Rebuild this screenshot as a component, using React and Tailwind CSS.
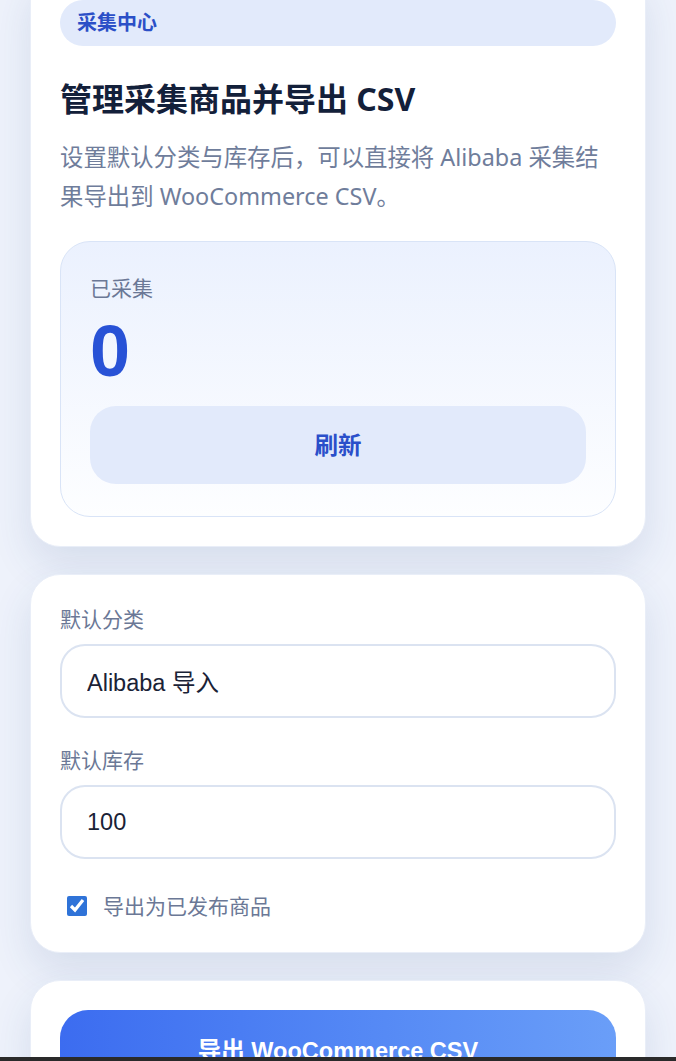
import { useState } from "react";

const sans = "font-['Noto_Sans','Noto_Sans_CJK_SC',sans-serif]";
const arial = "font-['Liberation_Sans','Noto_Sans_CJK_SC',sans-serif]";

export default function App() {
  const [category, setCategory] = useState("Alibaba 导入");
  const [stock, setStock] = useState("100");
  const [published, setPublished] = useState(true);

  return (
    <div className={`min-h-screen bg-[#eef2fb] px-[30px] ${sans}`}>
      <div className="-mt-[30px] flex flex-col gap-[27px] pb-10">
        {/* Summary card */}
        <section className="rounded-[30px] border border-[#e9eef8] bg-white p-[29px] shadow-[0_18px_40px_rgba(40,70,130,0.12)]">
          <div className="flex h-[46px] items-center rounded-full bg-[#e2eafb] px-[17px] text-[20px] font-bold text-[#2b4fc7]">
            采集中心
          </div>
          <h1 className="mt-[32px] text-[32px] font-bold leading-[42px] text-[#13203a]">
            管理采集商品并导出 CSV
          </h1>
          <p className="mt-[18px] text-[23.4px] leading-[39px] text-[#6f7d9b]">
            设置默认分类与库存后，可以直接将 Alibaba 采集结果导出到 WooCommerce CSV。
          </p>

          {/* Stats box */}
          <div className="mt-[25px] rounded-[30px] border-[1.5px] border-[#d9e4f7] bg-gradient-to-b from-[#ebf1fe] to-[#fdfeff] px-[29px] pb-[32px] pt-[30px]">
            <div className="text-[21px] leading-[32px] text-[#6b7896]">已采集</div>
            <div className={`mt-[12px] text-[72px] font-bold leading-[70px] text-[#2852d6] ${arial}`}>0</div>
            <button
              type="button"
              className={`mt-[20px] h-[78px] w-full rounded-[26px] bg-[#e2eafb] pt-[4px] text-[23.5px] font-bold text-[#2a4fca] ${arial}`}
            >
              刷新
            </button>
          </div>
        </section>

        {/* Settings card */}
        <section className="rounded-[30px] border border-[#e9eef8] bg-white px-[29px] pb-[30px] pt-[28px] shadow-[0_18px_40px_rgba(40,70,130,0.12)]">
          <label className="block text-[21px] leading-[32px] text-[#6b7896]">默认分类</label>
          <input
            type="text"
            value={category}
            onChange={(e) => setCategory(e.target.value)}
            className={`mt-[9px] h-[74px] w-full rounded-[25px] border-2 border-[#dbe3f1] bg-white px-[25px] text-[23.5px] text-[#1a2236] outline-none ${arial}`}
          />

          <label className="mt-[26px] block text-[21px] leading-[32px] text-[#6b7896]">默认库存</label>
          <input
            type="text"
            value={stock}
            onChange={(e) => setStock(e.target.value)}
            className={`mt-[9px] h-[74px] w-full rounded-[25px] border-2 border-[#dbe3f1] bg-white px-[25px] text-[23.5px] text-[#1a2236] outline-none ${arial}`}
          />

          <label className="mt-[31px] flex items-center gap-[16px] pl-[7px] text-[21px] leading-[32px] text-[#6b7896]">
            <input
              type="checkbox"
              checked={published}
              onChange={(e) => setPublished(e.target.checked)}
              className="m-0 h-[20px] w-[20px] accent-[#2f73d8]"
            />
            导出为已发布商品
          </label>
        </section>

        {/* Export card */}
        <section className="rounded-[30px] border border-[#e9eef8] bg-white p-[29px] shadow-[0_18px_40px_rgba(40,70,130,0.12)]">
          <button
            type="button"
            className={`h-[84px] w-full rounded-[28px] bg-gradient-to-r from-[#3c6cf0] to-[#6a9ef8] text-[23.5px] font-bold text-white ${arial}`}
          >
            导出 WooCommerce CSV
          </button>
        </section>
      </div>

      <div className="fixed inset-x-0 bottom-0 h-[4px] bg-[#2a2a2a]" />
    </div>
  );
}
